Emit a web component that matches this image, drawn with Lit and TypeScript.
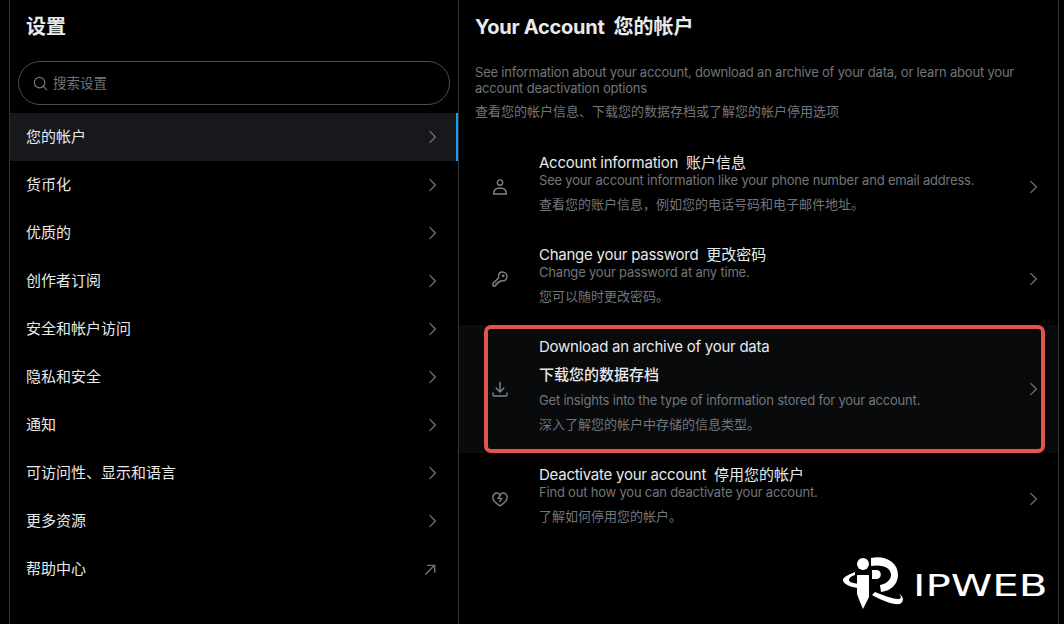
import { LitElement, html, css, svg } from 'lit';
import { customElement } from 'lit/decorators.js';

const chevron = html`<svg class="chev" viewBox="0 0 12 18" fill="none" stroke="currentColor" stroke-width="1.5"><path d="M3 2l7 7-7 7"/></svg>`;
const external = html`<svg class="chev ext" viewBox="0 0 14 14" fill="none" stroke="currentColor" stroke-width="1.5"><path d="M1.5 12.5L11.5 2.5M3.5 2.5h8v8"/></svg>`;

const navItems = ['您的帐户', '货币化', '优质的', '创作者订阅', '安全和帐户访问', '隐私和安全', '通知', '可访问性、显示和语言', '更多资源', '帮助中心'];

const personIcon = svg`<circle cx="8" cy="3.6" r="2.7"/><path d="M1.6 15c0-4 2.5-6 6.4-6s6.4 2 6.4 6z"/>`;
const keyIcon = svg`<path d="M10.4 1C13 1 15 3 15 5.5S13 10 10.4 10c-.6 0-1.2-.1-1.7-.3L7.2 11.300H5.600v1.600H4v1.600l-.6.500H1v-2.600l5.700-5.600c-.1-.4-.2-.9-.2-1.300C6.500 3 8 1 10.400 1z"/><circle cx="11.200" cy="4.800" r=".7"/>`;
const downloadIcon = svg`<path d="M8 .8v10M3.800 6.800L8 11l4.200-4.200M1 11.600v2.200c0 .7.500 1.200 1.200 1.200h11.600c.7 0 1.200-.5 1.200-1.200v-2.200"/>`;
const heartIcon = svg`<path d="M8 14.800C3.400 12 .8 9.600.8 6.200.8 3.700 2.700 2 4.700 2 6 2 7.200 2.600 8 3.800 8.800 2.600 10 2 11.300 2c2 0 3.900 1.700 3.900 4.200 0 3.400-2.600 5.800-7.200 8.600z"/><path d="M9 3.400L6.200 7.400h3.400l-2.200 3.400"/>`;

interface Row {
  icon: unknown;
  title: string;
  titleZh: string;
  sub: string;
  subZh: string;
  tall?: boolean;
}

const rows: Row[] = [
  { icon: personIcon, title: 'Account information', titleZh: '账户信息', sub: 'See your account information like your phone number and email address.', subZh: '查看您的账户信息，例如您的电话号码和电子邮件地址。' },
  { icon: keyIcon, title: 'Change your password', titleZh: '更改密码', sub: 'Change your password at any time.', subZh: '您可以随时更改密码。' },
  { icon: downloadIcon, title: 'Download an archive of your data', titleZh: '下载您的数据存档', sub: 'Get insights into the type of information stored for your account.', subZh: '深入了解您的帐户中存储的信息类型。', tall: true },
  { icon: heartIcon, title: 'Deactivate your account', titleZh: '停用您的帐户', sub: 'Find out how you can deactivate your account.', subZh: '了解如何停用您的帐户。' },
];

@customElement('app-root')
export class AppRoot extends LitElement {
  static styles = css`
    :host {
      display: block;
      width: 1064px;
      height: 624px;
      background: #000;
      color: #e7e9ea;
      font-family: Inter, 'Noto Sans CJK SC', sans-serif;
      overflow: hidden;
      position: relative;
    }

    .layout {
      display: flex;
      height: 624px;
      padding-left: 9px;
      width: 1050px;
    }

    .side {
      width: 450px;
      flex: none;
      box-sizing: border-box;
      border-left: 1px solid #2f3336;
      border-right: 1px solid #2f3336;
    }

    .side h1 {
      margin: 0;
      height: 54px;
      padding-left: 16px;
      font-size: 20px;
      line-height: 54px;
      font-weight: 700;
    }

    .search {
      display: flex;
      align-items: center;
      gap: 5px;
      height: 42px;
      margin: 7px 8px 8px;
      padding-left: 14px;
      border: 1px solid #4a4f53;
      border-radius: 22px;
      color: #71767b;
      font-size: 13.5px;
    }

    .search span {
      padding-bottom: 2px;
    }

    .search svg {
      width: 15px;
      height: 15px;
    }

    .nav {
      display: flex;
      align-items: center;
      justify-content: space-between;
      height: 48px;
      padding: 0 21px 0 16px;
      font-size: 15px;
      box-sizing: border-box;
    }

    .nav span {
      padding-bottom: 4px;
    }

    .nav.active {
      background: #16181c;
      border-right: 2px solid #1d9bf0;
      padding-right: 19px;
    }

    .chev {
      width: 10px;
      height: 16px;
      color: #71767b;
      flex: none;
    }

    .chev.ext {
      width: 13px;
      height: 13px;
    }

    .main {
      width: 600px;
      flex: none;
      box-sizing: border-box;
      border-right: 1px solid #2f3336;
    }

    .main h2 {
      margin: 0;
      height: 54px;
      padding-left: 16px;
      font-size: 20px;
      line-height: 54px;
      font-weight: 700;
      letter-spacing: -0.25px;
    }

    .main h2 span {
      letter-spacing: 0;
    }

    .intro {
      padding: 10px 30px 0 16px;
      height: 87px;
      box-sizing: border-box;
      color: #71767b;
      font-size: 13px;
      line-height: 16px;
    }

    .intro p {
      margin: 0 0 7px;
    }

    .intro .en,
    .sub {
      letter-spacing: -0.2px;
    }

    .row {
      display: flex;
      align-items: center;
      height: 92px;
      padding: 0 20px 0 33px;
    }

    .row.tall {
      height: 128px;
      background: #080a0c;
    }

    .row-icon {
      width: 16px;
      height: 16px;
      flex: none;
      margin-right: 31px;
      fill: none;
      stroke: #7f8387;
      stroke-width: 1.4;
    }

    .row-text {
      flex: 1;
      margin-top: -9px;
    }

    .tall .row-text {
      margin-top: -8px;
    }

    .title {
      font-size: 15px;
      line-height: 18px;
      letter-spacing: -0.25px;
    }

    .title span {
      margin-left: 8px;
      letter-spacing: 0;
    }

    .tall .title span {
      display: block;
      margin: 10px 0 0;
      font-weight: 500;
    }

    .sub {
      color: #71767b;
      font-size: 13px;
      line-height: 16px;
    }

    .zh {
      color: #71767b;
      font-size: 13px;
      line-height: 16px;
      margin-top: 8px;
    }

    .tall .sub {
      margin-top: 8px;
    }

    .highlight {
      position: absolute;
      left: 484px;
      top: 325px;
      width: 561px;
      height: 128px;
      box-sizing: border-box;
      border: 4px solid #e5534f;
      border-radius: 7px;
      pointer-events: none;
    }

    .watermark {
      position: absolute;
      left: 842px;
      top: 556px;
      display: flex;
      align-items: center;
      color: #fff;
    }

    .watermark svg {
      width: 64px;
      height: 56px;
    }

    .watermark span {
      margin: 4px 0 0 7px;
      font-family: 'DejaVu Sans', sans-serif;
      font-size: 30px;
      line-height: 40px;
      transform: scaleX(1.4);
      transform-origin: left center;
    }
  `;

  render() {
    return html`
      <div class="layout">
        <section class="side">
          <h1>设置</h1>
          <div class="search">
            <svg viewBox="0 0 16 16" fill="none" stroke="currentColor" stroke-width="1.3"><circle cx="7" cy="7" r="5.6"/><path d="M11 11l4 4"/></svg>
            <span>搜索设置</span>
          </div>
          ${navItems.map(
            (item, i) => html`
              <div class="nav ${i === 0 ? 'active' : ''}">
                <span>${item}</span>
                ${i === navItems.length - 1 ? external : chevron}
              </div>
            `
          )}
        </section>
        <section class="main">
          <h2>Your Account&nbsp; <span>您的帐户</span></h2>
          <div class="intro">
            <p class="en">See information about your account, download an archive of your data, or learn about your account deactivation options</p>
            <p>查看您的帐户信息、下载您的数据存档或了解您的帐户停用选项</p>
          </div>
          ${rows.map(
            (r) => html`
              <div class="row ${r.tall ? 'tall' : ''}">
                <svg class="row-icon" viewBox="0 0 16 16">${r.icon}</svg>
                <div class="row-text">
                  <div class="title">${r.title}<span>${r.titleZh}</span></div>
                  <div class="sub">${r.sub}</div>
                  <div class="zh">${r.subZh}</div>
                </div>
                ${chevron}
              </div>
            `
          )}
        </section>
      </div>
      <div class="highlight"></div>
      <div class="watermark">
        <svg viewBox="0 0 64 56" fill="#fff">
          <circle cx="21" cy="8" r="6"/>
          <path d="M15 19h12v22l-6 12-3-7-3-8z"/>
          <path d="M29 2c14-3 27 4 27 17 0 9-7 16-17 17l-1-7c6-1 11-5 11-10 0-7-8-11-20-9z"/>
          <path d="M30 14h5c5 0 5 9 0 9h-5z"/>
          <path d="M13 16C5 19 0 22 1 25c1 3 7 6 15 7v-4c-5-1-9-2-9-4 0-2 2-4 6-5z"/>
          <path d="M33 36c10 4 18 7 23 7 3 0 4-2 1-5 5 2 5 8 1 10-7 1-17-3-28-9z"/>
        </svg>
        <span>IPWEB</span>
      </div>
    `;
  }
}

declare global {
  interface HTMLElementTagNameMap {
    'app-root': AppRoot;
  }
}
